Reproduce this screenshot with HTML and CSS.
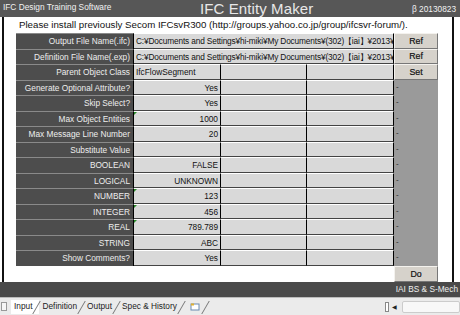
FILE: index.html
```html
<!DOCTYPE html>
<html>
<head>
<meta charset="utf-8">
<link rel="stylesheet" href="styles.css">
</head>
<body>
<div class="app">
  <div class="titlebar">
    <span class="t-left">IFC Design Training Software</span>
    <span class="t-center">IFC Entity Maker</span>
    <span class="t-right">β 20130823</span>
  </div>
  <div class="frame">
    <div class="notice">Please install previously Secom IFCsvR300 (http://groups.yahoo.co.jp/group/ifcsvr-forum/).</div>
    <div class="main">
      <div class="grid">
        <div class="lbl">Output File Name(.ifc)</div>
        <div class="val span3 path">C:¥Documents and Settings¥hi-miki¥My Documents¥(302)【iai】¥2013¥</div>
        <div class="lbl">Definition File Name(.exp)</div>
        <div class="val span3 path">C:¥Documents and Settings¥hi-miki¥My Documents¥(302)【iai】¥2013¥</div>
        <div class="lbl">Parent Object Class</div>
        <div class="val left">IfcFlowSegment</div><div class="val"></div><div class="val"></div>
        <div class="lbl">Generate Optional Attribute?</div>
        <div class="val">Yes</div><div class="val"></div><div class="val"></div>
        <div class="lbl">Skip Select?</div>
        <div class="val">Yes</div><div class="val"></div><div class="val"></div>
        <div class="lbl">Max Object Entities</div>
        <div class="val mark">1000</div><div class="val"></div><div class="val"></div>
        <div class="lbl">Max Message Line Number</div>
        <div class="val">20</div><div class="val"></div><div class="val"></div>
        <div class="lbl">Substitute Value</div>
        <div class="val"></div><div class="val"></div><div class="val"></div>
        <div class="lbl">BOOLEAN</div>
        <div class="val">FALSE</div><div class="val"></div><div class="val"></div>
        <div class="lbl">LOGICAL</div>
        <div class="val">UNKNOWN</div><div class="val"></div><div class="val"></div>
        <div class="lbl">NUMBER</div>
        <div class="val mark">123</div><div class="val"></div><div class="val"></div>
        <div class="lbl">INTEGER</div>
        <div class="val mark">456</div><div class="val"></div><div class="val"></div>
        <div class="lbl">REAL</div>
        <div class="val mark">789.789</div><div class="val"></div><div class="val"></div>
        <div class="lbl">STRING</div>
        <div class="val">ABC</div><div class="val"></div><div class="val"></div>
        <div class="lbl">Show Comments?</div>
        <div class="val">Yes</div><div class="val"></div><div class="val"></div>
      </div>
      <div class="side">
        <div class="btn">Ref</div>
        <div class="btn">Ref</div>
        <div class="btn">Set</div>
        <div class="dash">-</div><div class="dash">-</div><div class="dash">-</div><div class="dash">-</div>
        <div class="dash">-</div><div class="dash">-</div><div class="dash">-</div><div class="dash">-</div>
        <div class="dash">-</div><div class="dash">-</div><div class="dash">-</div><div class="dash">-</div>
      </div>
    </div>
    <div class="bottom">
      <div class="btn do">Do</div>
    </div>
  </div>
  <div class="status">IAI BS &amp; S-Mech</div>
  <div class="tabs">
    <span class="tabnav"></span>
    <span class="tab active">Input</span>
    <span class="tab">Definition</span>
    <span class="tab">Output</span>
    <span class="tab">Spec &amp; History</span>
    <span class="tab icon"><svg width="10" height="8" viewBox="0 0 10 8"><rect x="1" y="1" width="8" height="6" fill="#fff" stroke="#6a8ab0" stroke-width="1"/><rect x="1" y="0.5" width="3" height="2" fill="#e0b030"/></svg></span>
    <span class="spacer"></span>
    <span class="hs-split"></span>
    <span class="hs-arrow">◀</span>
    <span class="hs-track"></span>
  </div>
</div>
</body>
</html>
```

FILE: styles.css
```css
* { box-sizing: border-box; }
html, body { margin: 0; padding: 0; background: #fff; }
.app {
  width: 460px; height: 315px; overflow: hidden;
  display: flex; flex-direction: column;
  font-family: "Liberation Sans", Arial, sans-serif;
  background: #fff;
}
.titlebar {
  height: 17px; background: #575757; color: #f2f2f2;
  display: flex; align-items: center; position: relative;
  padding: 0 4px 0 3px;
}
.t-left { font-size: 8.3px; margin-top: -3px; }
.t-center { position: absolute; left: 200px; top: 0px; font-size: 15px; font-weight: normal; letter-spacing: 0.1px; line-height: 17px; color: #e8e8e8; }
.t-right { margin-left: auto; font-size: 8.3px; }
.frame {
  flex: 1; display: flex; flex-direction: column;
  border-left: 2px solid #111; border-right: 2px solid #111;
  margin: 0 6px 0 2px; padding-left: 12px;
}
.notice { height: 16px; font-size: 9.7px; line-height: 15px; padding-left: 3px; color: #111; }
.main { display: flex; height: 233px; }
.grid {
  width: 378px;
  display: grid;
  grid-template-columns: 118px 87px 86px 87px;
  grid-auto-rows: 15.53px;
  font-size: 8.3px;
}
.lbl {
  background: #4d4d4d; color: #eee;
  text-align: right; padding-right: 3px; line-height: 15px;
  border-top: 1px solid #8a8a8a;
  border-right: 1px solid #000;
  white-space: nowrap;
}
.val {
  background: #d9d9d9; color: #111;
  text-align: right; padding-right: 2px; line-height: 14px;
  border-top: 1px solid #fff; border-bottom: 1px solid #444;
  border-right: 1px solid #000;
  white-space: nowrap; overflow: hidden; position: relative;
}
.val.left { text-align: left; padding-left: 2px; }
.span3 { grid-column: span 3; }
.path { text-align: left; padding-left: 2px; letter-spacing: -0.15px; }
.mark::before {
  content: ""; position: absolute; left: 0; top: 0;
  border-top: 3px solid #2a8a2a; border-right: 3px solid transparent;
}
.side {
  width: 44px; background: #9a9a9a;
  display: grid; grid-auto-rows: 15.53px;
}
.btn {
  background: #d6d2cb; color: #111; font-size: 8.8px;
  display: flex; align-items: center; justify-content: center;
  border-top: 1px solid #f4f2ee; border-left: 1px solid #f4f2ee;
  border-right: 1px solid #777; border-bottom: 1px solid #777;
  -webkit-text-stroke: 0.2px #111;
}
.dash { font-size: 8px; line-height: 14px; padding-left: 2px; color: #222; }
.bottom { flex: 1; display: flex; justify-content: flex-end; padding-right: 14px; }
.do { width: 44px; height: 16px; }
.status {
  height: 15px; background: #4a4a4a; color: #eee;
  font-size: 8.3px; text-align: right; padding-right: 2px; line-height: 15px;
  margin-right: 0;
}
.tabs {
  height: 18px; background: #ebebeb; display: flex; align-items: center;
  font-size: 8.3px; color: #222; border-top: 1px solid #bbb;
}
.tabnav { width: 6px; height: 9px; border: 1px solid #999; margin: 0 4px 0 1px; background: #f6f6f6; }
.tab { padding: 0 7px 0 3px; position: relative; height: 14px; line-height: 13px; }
.tab::after {
  content: ""; position: absolute; right: 2px; top: 1px; width: 1px; height: 13px;
  background: #777; transform: skewX(-30deg);
}
.tab.active { background: #fff; }
.tab.icon { padding: 0 8px 0 6px; display: flex; align-items: center; }
.spacer { flex: 1; }
.hs-split { width: 4px; height: 10px; border: 1px solid #888; background: #fff; margin-right: 3px; }
.hs-arrow { font-size: 6px; color: #222; width: 10px; }
.hs-track { width: 58px; height: 12px; background: #f8f8f8; border: 1px solid #ccc; border-radius: 2px; }
```
